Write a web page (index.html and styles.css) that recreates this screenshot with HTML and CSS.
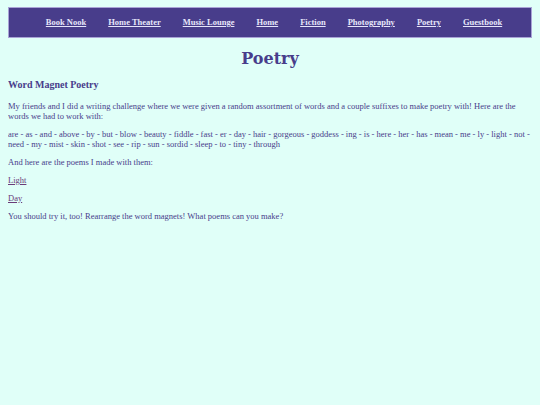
FILE: index.html
```html
<!DOCTYPE html>
<html>
<head>
<meta charset="utf-8">
<title>Poetry</title>
<link rel="stylesheet" href="styles.css">
</head>
<body>
<nav class="nav">
  <a href="#">Book Nook</a>
  <a href="#">Home Theater</a>
  <a href="#">Music Lounge</a>
  <a href="#">Home</a>
  <a href="#">Fiction</a>
  <a href="#">Photography</a>
  <a href="#">Poetry</a>
  <a href="#">Guestbook</a>
</nav>
<h1 class="title">Poetry</h1>
<h2 class="subtitle">Word Magnet Poetry</h2>
<p>My friends and I did a writing challenge where we were given a random assortment of words and a couple suffixes to make poetry with! Here are the words we had to work with:</p>
<p>are - as - and - above - by - but - blow - beauty - fiddle - fast - er - day - hair - gorgeous - goddess - ing - is - here - her - has - mean - me - ly - light - not - need - my - mist - skin - shot - see - rip - sun - sordid - sleep - to - tiny - through</p>
<p>And here are the poems I made with them:</p>
<p><a class="poem" href="#">Light</a></p>
<p><a class="poem" href="#">Day</a></p>
<p>You should try it, too! Rearrange the word magnets! What poems can you make?</p>
</body>
</html>
```
FILE: styles.css
```css
body {
  margin: 7px 8px;
  background: #e0fff8;
  color: #483d8b;
  font-family: "Liberation Serif", "Times New Roman", serif;
  font-size: 8.5px;
}
.nav {
  background: #483d8b;
  border: 1px solid #a9a3d6;
  display: flex;
  justify-content: center;
  gap: 22px;
  padding: 9px 0 10px 8px;
}
.nav a {
  color: #e6e6fa;
  font-weight: bold;
  font-size: 8.5px;
}
.title {
  text-align: center;
  font-family: "DejaVu Serif", Georgia, serif;
  font-size: 16px;
  margin: 11px 0 11px;
}
.subtitle {
  font-size: 10px;
  margin: 0 0 11px;
}
p {
  margin: 8px 0;
}
.poem {
  color: #6a3c78;
}
```
